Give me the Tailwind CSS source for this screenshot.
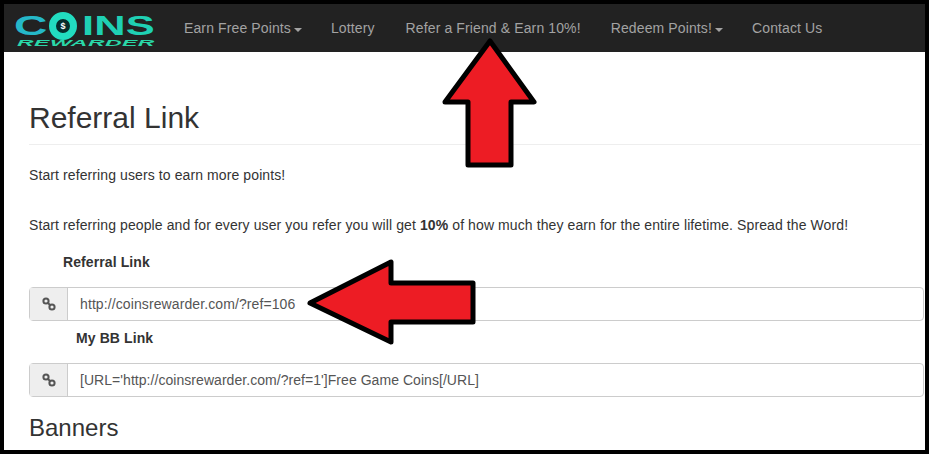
<!DOCTYPE html>
<html lang="en">
<head>
  <meta charset="utf-8"/>
  <title>Referral Link – Coins Rewarder</title>
  <script src="https://cdn.jsdelivr.net/npm/@tailwindcss/browser@4"></script>
</head>
<body class="bg-black font-['Liberation_Sans',Arial,sans-serif] text-[#333]">
  <div class="relative h-[454px] w-[929px] overflow-hidden bg-black pt-1 pb-1 pl-1 pr-1">
    <div class="h-full overflow-hidden bg-white">
      <nav class="flex h-12 items-center bg-[#222] text-sm tracking-[0.12px] text-[#a3a3a3]">
        <div class="mt-[5px] ml-[10px] h-[32px] w-[142px] shrink-0">
          <div class="flex h-[23px] items-center text-[28px] leading-none font-bold text-[#20c4c0]">
            <span class="w-[35px] origin-left scale-x-[1.65] text-[#25b8c8]">C</span>
            <span class="flex size-[28px] shrink-0 items-center justify-center rounded-full border-[7px] border-[#22dcc0] bg-[#062c2c] text-[9px] text-white">$</span>
            <span class="ml-[5px] origin-left scale-x-[1.55] text-[#1fd0b4]">INS</span>
          </div>
          <div class="mt-[1px] ml-[3px] origin-left scale-x-[2.55] text-[9px] leading-[8px] font-bold tracking-[0.2px] whitespace-nowrap text-[#2ad8a8] italic">REWARDER</div>
        </div>
        <ul class="ml-[28px] flex items-center">
          <li class="flex items-center gap-[3px]">Earn Free Points<span class="mt-[3px] border-x-4 border-t-4 border-x-transparent border-t-[#a3a3a3]"></span></li>
          <li class="ml-[29px]">Lottery</li>
          <li class="ml-[31px]">Refer a Friend &amp; Earn 10%!</li>
          <li class="ml-[30px] flex items-center gap-[3px]">Redeem Points!<span class="mt-[3px] border-x-4 border-t-4 border-x-transparent border-t-[#a3a3a3]"></span></li>
          <li class="ml-[29px]">Contact Us</li>
        </ul>
      </nav>
      <main class="px-[25px] text-sm tracking-[0.1px]">
        <h1 class="mt-[46px] mr-[-22px] border-b border-[#eee] pb-[6px] text-[30px] leading-[40px] font-normal tracking-normal">Referral Link</h1>
        <p class="mt-[20px] leading-5">Start referring users to earn more points!</p>
        <p class="mt-[30px] leading-5">Start referring people and for every user you refer you will get <b>10%</b> of how much they earn for the entire lifetime. Spread the Word!</p>
        <h2 class="mt-[17px] ml-[34px] leading-5 font-bold">Referral Link</h2>
        <div class="mt-[15px] mr-[-24px] flex h-[34px] rounded border border-[#ccc]">
          <span class="flex w-[38px] items-center justify-center border-r border-[#ccc] bg-[#eee]">
            <svg class="size-[14px]" viewBox="0 0 14 14" fill="none" stroke="#555" stroke-width="2"><circle cx="4" cy="4" r="2.6"/><circle cx="10" cy="10" r="2.6"/><path d="M5.5 5.5l3 3"/></svg>
          </span>
          <span class="flex items-center pl-3 text-[#555]">http://coinsrewarder.com/?ref=106</span>
        </div>
        <h2 class="mt-[7px] ml-[47px] leading-5 font-bold">My BB Link</h2>
        <div class="mt-[15px] mr-[-24px] flex h-[34px] rounded border border-[#ccc]">
          <span class="flex w-[38px] items-center justify-center border-r border-[#ccc] bg-[#eee]">
            <svg class="size-[14px]" viewBox="0 0 14 14" fill="none" stroke="#555" stroke-width="2"><circle cx="4" cy="4" r="2.6"/><circle cx="10" cy="10" r="2.6"/><path d="M5.5 5.5l3 3"/></svg>
          </span>
          <span class="flex items-center pl-3 tracking-[0.05px] text-[#555]">[URL='http://coinsrewarder.com/?ref=1']Free Game Coins[/URL]</span>
        </div>
        <h3 class="mt-[16px] text-2xl leading-[30px] font-normal tracking-normal">Banners</h3>
      </main>
    </div>
    <svg class="absolute top-0 left-0" width="929" height="454" fill="#ed1c24" stroke="#000" stroke-width="5" stroke-linejoin="round">
      <path d="M490 41L534 102H511V165H468V102H445Z"/>
      <path d="M310 303L391 262V283H473V322H391V342Z"/>
    </svg>
  </div>
</body>
</html>
